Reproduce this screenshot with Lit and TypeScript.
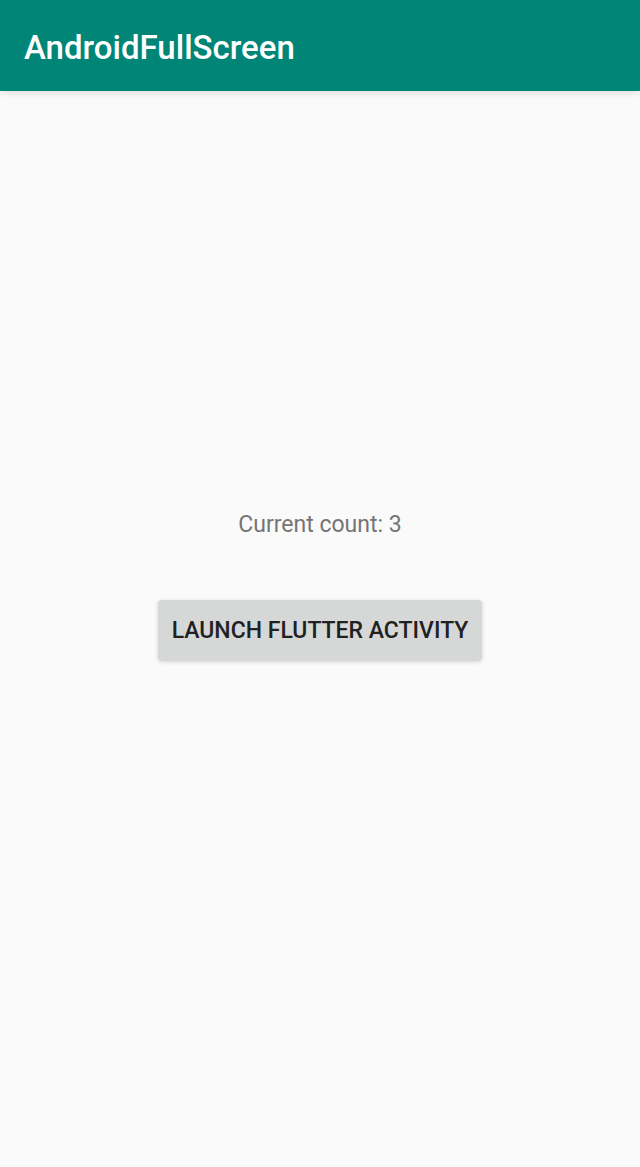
import { LitElement, html, css } from "lit";
import { customElement, state } from "lit/decorators.js";

@customElement("app-root")
export class AppRoot extends LitElement {
  static styles = css`
    :host {
      display: flex;
      flex-direction: column;
      min-height: 100vh;
      background: #fafafa;
      font-family: Roboto, "Noto Sans", sans-serif;
    }
    .bar {
      padding: 26px 24px 22px;
      background: #008577;
      box-shadow: 0 1px 8px rgba(0, 0, 0, 0.14);
    }
    .title {
      margin: 0;
      color: #fff;
      font-size: 33px;
      line-height: 43px;
      font-weight: 500;
    }
    .content {
      flex: 1;
      display: flex;
      flex-direction: column;
      align-items: center;
      justify-content: center;
      gap: 59px;
      padding-bottom: 88px;
    }
    .count {
      margin: 0;
      color: #757575;
      font-size: 23px;
      line-height: 32px;
    }
    .launch {
      border: 0;
      border-radius: 4px;
      padding: 15px 14px 14px;
      background: #d6d8d7;
      color: #212121;
      font-family: inherit;
      font-size: 23px;
      line-height: 32px;
      font-weight: 500;
      text-transform: uppercase;
      box-shadow: 0 1px 4px rgba(0, 0, 0, 0.16);
      cursor: pointer;
    }
  `;

  @state() private count = 3;

  render() {
    return html`
      <header class="bar"><h1 class="title">AndroidFullScreen</h1></header>
      <main class="content">
        <p class="count">Current count: ${this.count}</p>
        <button class="launch" type="button" @click=${() => this.count++}>Launch Flutter Activity</button>
      </main>
    `;
  }
}
